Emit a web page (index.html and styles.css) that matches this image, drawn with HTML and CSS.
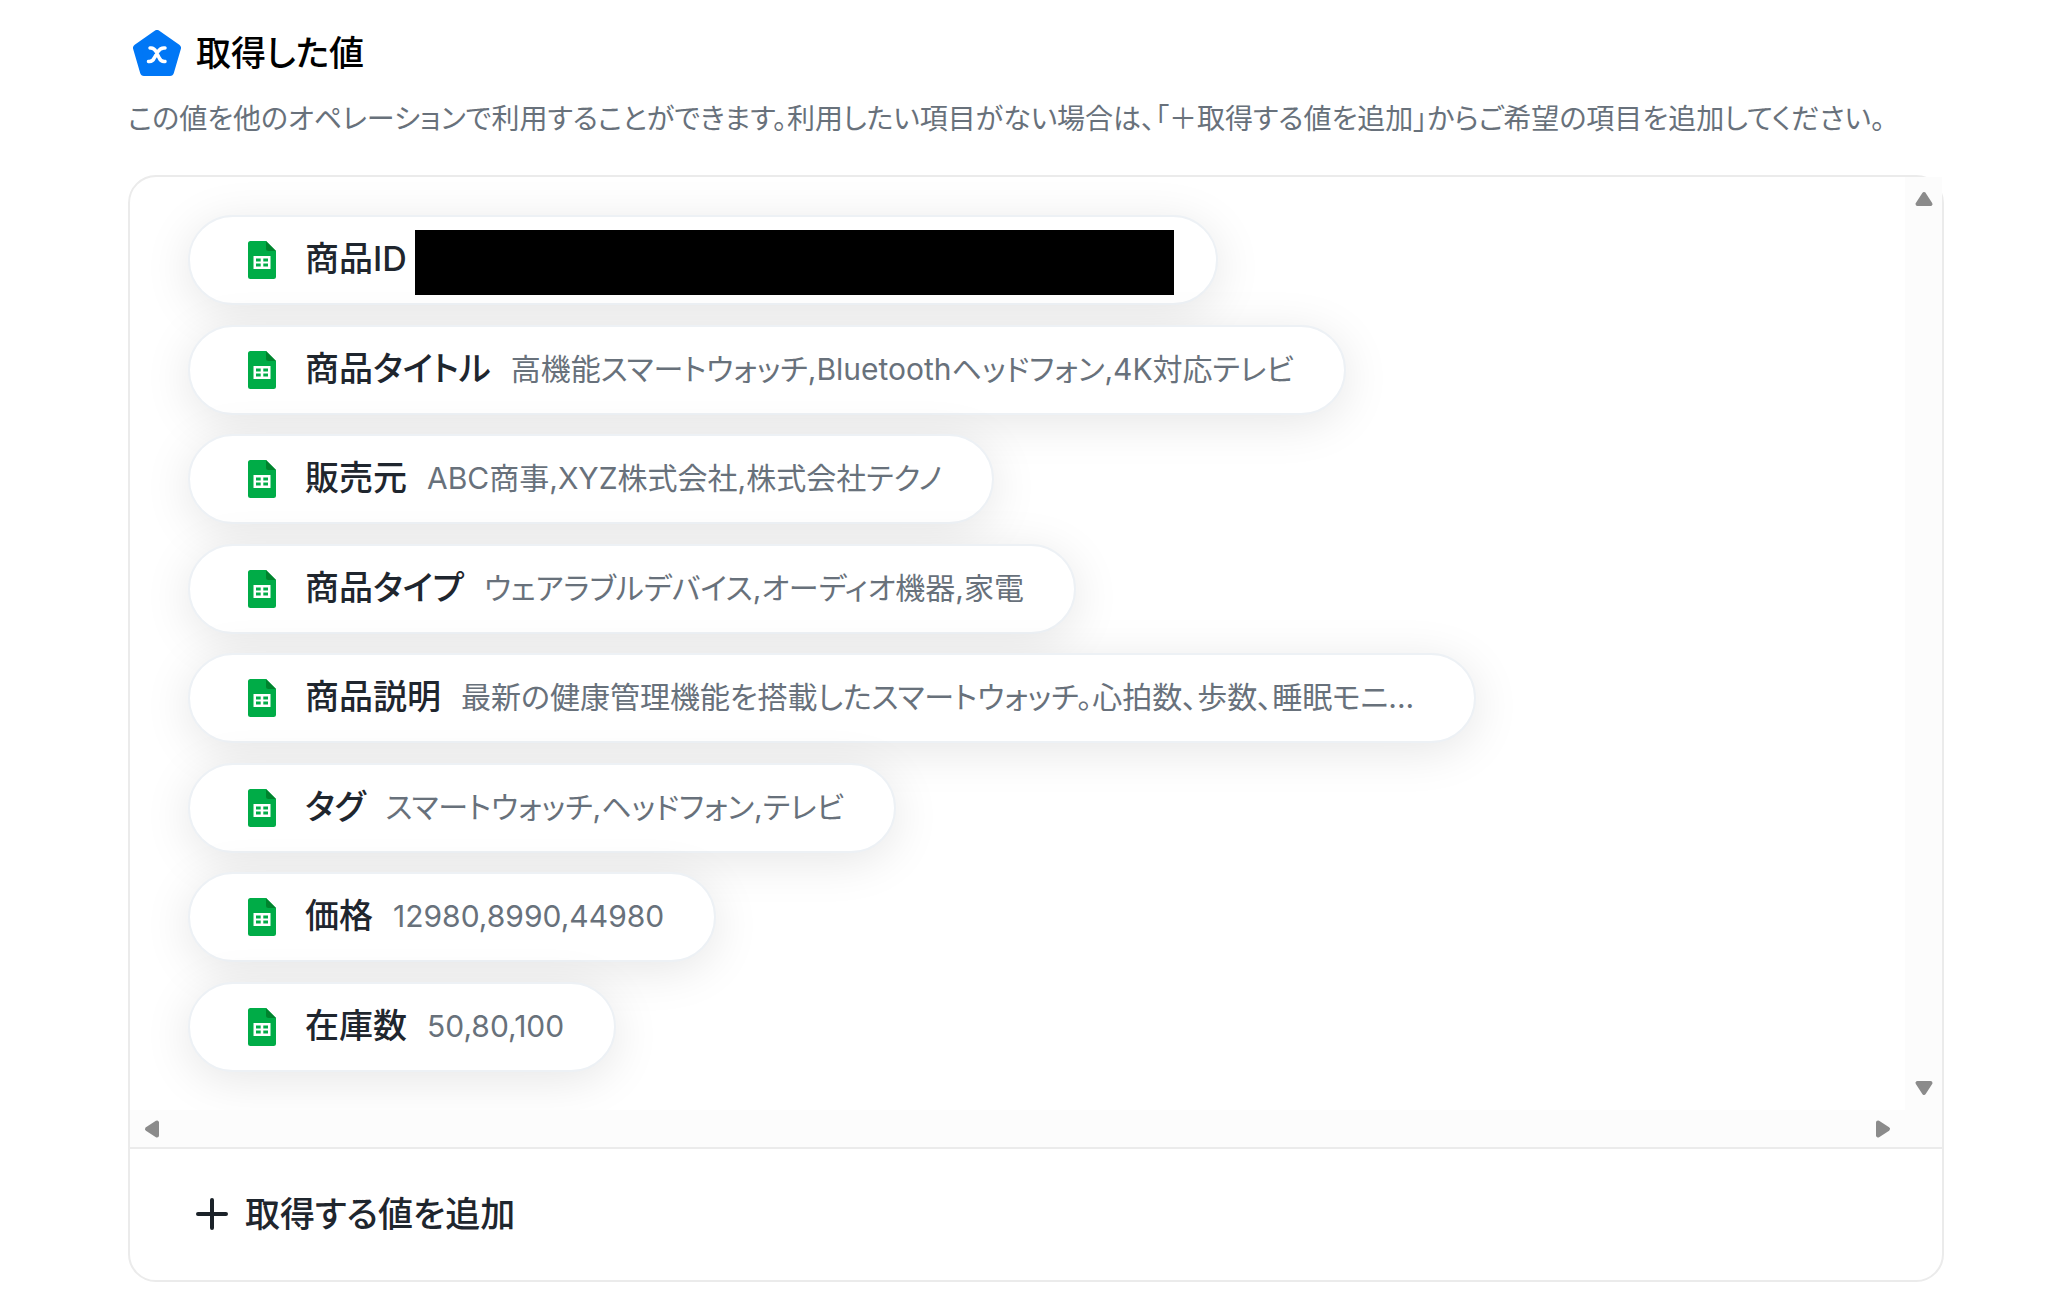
FILE: index.html
```
<!DOCTYPE html>
<html lang="ja">
<head>
  <meta charset="UTF-8" />
  <meta name="viewport" content="width=device-width, initial-scale=1.0"/>
  <title>取得した値</title>
  <link rel="stylesheet" href="styles.css">
</head>
<body>
  <!-- Shared icons -->
  <svg width="0" height="0" class="sprite" aria-hidden="true">
    <symbol id="sheet" viewBox="0 0 28 38">
      <path d="M2.500 0H18l10 10v25.500a2.500 2.500 0 0 1-2.500 2.500h-23A2.500 2.500 0 0 1 0 35.500v-33A2.500 2.500 0 0 1 2.500 0z" fill="#00ac47"/>
      <path d="M18 0l10 10h-7.500A2.500 2.500 0 0 1 18 7.500z" fill="#00832d"/>
      <path d="M5.500 15h17v13h-17zM8 17.500v3h4.700v-3zM15.300 17.500v3H20v-3zM8 22.500v3h4.700v-3zM15.300 22.500v3H20v-3z" fill="#fff" fill-rule="evenodd"/>
    </symbol>
    <symbol id="arrow" viewBox="0 0 20 16">
      <path d="M10 3L16.500 13H3.500z" fill="#8b8b8b" stroke="#8b8b8b" stroke-width="4" stroke-linejoin="round"/>
    </symbol>
  </svg>

  <main class="container">
    <header class="title">
      <svg class="title-icon" viewBox="0 0 48 46" aria-hidden="true">
        <path d="M24 4L44 18L37 42H11L4 18z" fill="#0077f6" stroke="#0077f6" stroke-width="8" stroke-linejoin="round"/>
        <path d="M17 18c3-.5 4.500 .5 6 3.500l3 6c1.500 3.500 3 4.500 6 4M32 18c-3-.5-5 .5-7 3.500l-3.500 6c-1.500 3.500-3 4.500-6 4" fill="none" stroke="#fff" stroke-width="3.500" stroke-linecap="round"/>
      </svg>
      <h1>取得した値</h1>
    </header>
    <p class="description">この値を他のオペレーションで利用することができます。利用したい項目がない場合は、「＋取得する値を追加」からご希望の項目を追加してください。</p>

    <section class="panel">
      <div class="scroll-area">
        <ul class="values">
          <li class="chip chip-masked"><svg class="sheet" aria-hidden="true"><use href="#sheet"/></svg><span class="label">商品ID</span><span class="mask"></span></li>
          <li class="chip"><svg class="sheet" aria-hidden="true"><use href="#sheet"/></svg><span class="label">商品タイトル</span><span class="value">高機能スマートウォッチ,Bluetoothヘッドフォン,4K対応テレビ</span></li>
          <li class="chip"><svg class="sheet" aria-hidden="true"><use href="#sheet"/></svg><span class="label">販売元</span><span class="value">ABC商事,XYZ株式会社,株式会社テクノ</span></li>
          <li class="chip"><svg class="sheet" aria-hidden="true"><use href="#sheet"/></svg><span class="label">商品タイプ</span><span class="value">ウェアラブルデバイス,オーディオ機器,家電</span></li>
          <li class="chip chip-long"><svg class="sheet" aria-hidden="true"><use href="#sheet"/></svg><span class="label">商品説明</span><span class="value">最新の健康管理機能を搭載したスマートウォッチ。心拍数、歩数、睡眠モニ...</span></li>
          <li class="chip"><svg class="sheet" aria-hidden="true"><use href="#sheet"/></svg><span class="label">タグ</span><span class="value">スマートウォッチ,ヘッドフォン,テレビ</span></li>
          <li class="chip"><svg class="sheet" aria-hidden="true"><use href="#sheet"/></svg><span class="label">価格</span><span class="value">12980,8990,44980</span></li>
          <li class="chip"><svg class="sheet" aria-hidden="true"><use href="#sheet"/></svg><span class="label">在庫数</span><span class="value">50,80,100</span></li>
        </ul>
        <div class="bar bar-vertical">
          <button type="button" aria-label="上へ"><svg class="arrow"><use href="#arrow"/></svg></button>
          <button type="button" aria-label="下へ"><svg class="arrow arrow-down"><use href="#arrow"/></svg></button>
        </div>
        <div class="bar bar-horizontal">
          <button type="button" aria-label="左へ"><svg class="arrow arrow-left"><use href="#arrow"/></svg></button>
          <button type="button" aria-label="右へ"><svg class="arrow arrow-right"><use href="#arrow"/></svg></button>
        </div>
        <div class="bar-corner"></div>
      </div>
      <div class="panel-footer">
        <button type="button" class="add-button">
          <svg class="plus" viewBox="0 0 32 32" aria-hidden="true"><path d="M16 2v28M2 16h28" stroke="#1b2229" stroke-width="4" stroke-linecap="round"/></svg>
          取得する値を追加
        </button>
      </div>
    </section>
  </main>
</body>
</html>
```
FILE: styles.css
```
* {
  box-sizing: border-box;
}

body {
  margin: 0;
  font-family: Inter, "Noto Sans CJK JP", sans-serif;
  font-feature-settings: "palt";
  background: #fff;
  color: #1f262e;
}

.sprite {
  position: absolute;
}

.container {
  padding: 27px 104px 20px 128px;
}

.title {
  display: flex;
  align-items: center;
  gap: 15px;
  height: 52px;
  padding-left: 5px;
}

.title-icon {
  width: 48px;
  height: 46px;
}

h1 {
  margin: 0;
  font-size: 35px;
  font-weight: 500;
  line-height: 52px;
  color: #000;
}

.description {
  margin: 20px 0 35px;
  font-size: 28px;
  line-height: 41px;
  color: #68717b;
}

.panel {
  border: 2px solid #ebebeb;
  border-radius: 28px;
}

.scroll-area {
  display: grid;
  grid-template-columns: 1fr 37px;
  grid-template-rows: auto 37px;
}

.values {
  display: flex;
  flex-direction: column;
  align-items: flex-start;
  justify-content: space-between;
  min-height: 933px;
  margin: 0;
  padding: 38px 58px;
  list-style: none;
}

.chip {
  display: flex;
  align-items: center;
  height: 90px;
  padding: 0 50px 0 58px;
  border: 2px solid #edf1f5;
  border-radius: 45px;
  background: #fff;
  box-shadow: 0 8px 48px rgba(0, 0, 0, 0.1);
  white-space: nowrap;
}

.chip-masked {
  padding-right: 42px;
}

.chip-long {
  padding-right: 60px;
}

.sheet {
  width: 28px;
  height: 38px;
  margin-right: 29px;
}

.label,
.value {
  line-height: 52px;
  padding-bottom: 2px;
}

.label {
  font-size: 34px;
  font-weight: 500;
}

.value {
  margin-left: 20px;
  font-size: 30px;
  color: #68717b;
}

.mask {
  width: 759px;
  height: 65px;
  margin: 5px 0 0 8px;
  background: #000;
}

.bar {
  display: flex;
  justify-content: space-between;
  background: #fcfcfc;
}

.bar-vertical {
  flex-direction: column;
}

.bar-corner {
  background: #fcfcfc;
}

.bar button {
  display: flex;
  align-items: center;
  justify-content: center;
  width: 37px;
  height: 44px;
  padding: 0;
  border: none;
  background: none;
}

.bar-horizontal button {
  width: 44px;
  height: 37px;
}

.arrow {
  width: 20px;
  height: 16px;
}

.arrow-down {
  transform: rotate(180deg);
}

.arrow-left {
  transform: rotate(-90deg);
}

.arrow-right {
  transform: rotate(90deg);
}

.panel-footer {
  padding: 39px 66px 40px;
  border-top: 2px solid #ebebeb;
}

.add-button {
  display: flex;
  align-items: center;
  gap: 17px;
  padding: 0;
  border: none;
  background: none;
  font: inherit;
  font-size: 35px;
  font-weight: 500;
  line-height: 52px;
  color: #1f262e;
  cursor: pointer;
}

.plus {
  width: 32px;
  height: 32px;
}
```
